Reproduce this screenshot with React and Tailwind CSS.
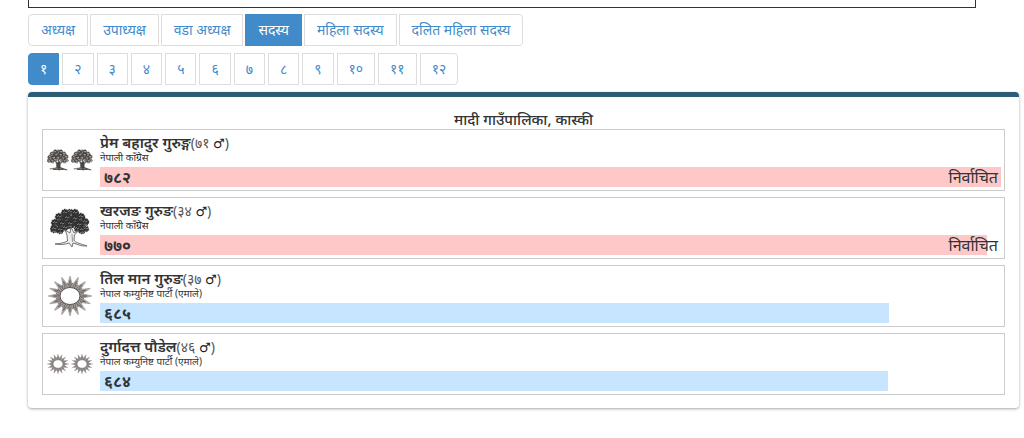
import { useState } from "react";

const posts = ["अध्यक्ष", "उपाध्यक्ष", "वडा अध्यक्ष", "सदस्य", "महिला सदस्य", "दलित महिला सदस्य"];
const wards = ["१", "२", "३", "४", "५", "६", "७", "८", "९", "१०", "११", "१२"];

const candidates = [
  { name: "प्रेम बहादुर गुरुङ्ग", age: "७१", party: "नेपाली काँग्रेस", votes: 782, label: "७८२", symbol: "tree", count: 2, elected: true },
  { name: "खरजङ गुरुङ", age: "३४", party: "नेपाली काँग्रेस", votes: 770, label: "७७०", symbol: "tree", count: 1, elected: true },
  { name: "तिल मान गुरुङ", age: "३७", party: "नेपाल कम्युनिष्ट पार्टी (एमाले)", votes: 685, label: "६८५", symbol: "sun", count: 1 },
  { name: "दुर्गादत्त पौडेल", age: "४६", party: "नेपाल कम्युनिष्ट पार्टी (एमाले)", votes: 684, label: "६८४", symbol: "sun", count: 2 },
];

const maxVotes = 782;

// [cx, cy, r] of the leaf clumps
const clumps = [
  [15, 5, 4], [20, 4, 3], [25, 5, 4], [9, 9, 4], [17, 10, 5], [25, 11, 5],
  [31, 9, 4], [35, 14, 4], [5, 15, 4], [12, 16, 5], [20, 16, 5], [29, 17, 5],
  [4, 21, 4], [10, 22, 4], [15, 20, 3], [27, 21, 3], [32, 22, 4], [36, 21, 3],
];

const Tree = ({ small, className }) => (
  <svg viewBox="0 0 40 40" className={className} aria-hidden="true">
    {clumps.map(([cx, cy, r]) => (
      <g key={`${cx}-${cy}`}>
        <circle
          cx={cx}
          cy={cy}
          r={r - 0.5}
          fill={small ? "#4d4845" : "#303030"}
          stroke="#3a3a3a"
          strokeWidth="1.4"
          strokeDasharray="1.5 1"
        />
        <path
          d={`M${cx - 2} ${cy}l1.5-1.5 1 1.5 2-1M${cx - 2} ${cy + 3}l2-1 2 .5`}
          fill="none"
          stroke={small ? "#d0cac6" : "#999"}
          strokeWidth={small ? "1.3" : ".7"}
        />
      </g>
    ))}
    <path
      d="M15 22 17 27 17.5 33 C14 35 10 35.5 5 36 C11 37 15 36.5 19 35 L22 39 23 35 C27 36 31 38.5 37 38 C31 35.5 25 35 24 32 L24.5 27 29 22 24 25 21 19 20 25Z"
      fill={small ? "#4a4542" : "#eee"}
      stroke="#555"
      strokeWidth=".8"
    />
    {small && <path d="M11 37H30" stroke="#444" strokeWidth="2" />}
    {!small && <path d="M22 26 22.5 34" stroke="#999" strokeWidth="1" />}
  </svg>
);

const Sun = ({ className }) => (
  <svg viewBox="-22 -20 44 40" className={className} aria-hidden="true">
    {Array.from({ length: 16 }, (_, i) => (
      <g key={i} transform={`scale(1 .92) rotate(${i * 22.5})`}>
        <path d="M-3.5-9-.5-22H.5L3.5-9Z" fill="#aaa4a3" />
        <path d="M-1.5-9 0-17 1.5-9M-3.5-9-3-14M3.5-9 3-14" fill="none" stroke="#6b6463" strokeWidth=".8" />
      </g>
    ))}
    <ellipse rx="10" ry="8.5" fill="#fff" stroke="#5b5453" strokeWidth="1" />
  </svg>
);

const symbols = { tree: Tree, sun: Sun };

const Pager = ({ items, active, onSelect, label, className, itemClassName }) => (
  <nav aria-label={label} className={`flex flex-wrap ${className}`}>
    {items.map((item, i) => (
      <button
        key={item}
        type="button"
        onClick={() => onSelect(i)}
        className={`border text-sm leading-5 first:rounded-l last:rounded-r ${itemClassName} ${
          i === active ? "border-[#428bca] bg-[#428bca] text-white" : "border-[#ddd] bg-white text-[#428bca]"
        }`}
      >
        {item}
      </button>
    ))}
  </nav>
);

const Candidate = ({ data }) => {
  const Symbol = symbols[data.symbol];
  const small = data.count > 1;
  const size = data.symbol === "tree" && !small ? "w-10" : small ? "w-[22px]" : "w-11";
  return (
    <li className="flex border border-[#ccc] pr-[3px]">
      <div className="mr-[3px] flex w-[54px] shrink-0 items-center justify-center gap-[2px]">
        {Array.from({ length: data.count }, (_, i) => (
          <Symbol key={i} small={small} className={size} />
        ))}
      </div>
      <div className="min-w-0 grow py-[3px]">
        <h3 className="flex h-[18px] items-baseline text-[15px] leading-[18px] text-[#333]">
          <span className="font-semibold">{data.name}</span>
          <span className="text-sm leading-[18px] text-[#555]">
            ({data.age} <b className="font-['DejaVu_Sans',sans-serif] text-[13px] text-[#222]">♂</b>)
          </span>
        </h3>
        <p className="text-[10px] leading-3 text-[#333]">{data.party}</p>
        <div className="relative mt-1 flex h-5 items-center justify-between pr-[3px] pl-1 text-base leading-5 text-[#333]">
          <div
            className={`absolute inset-y-0 left-0 ${data.elected ? "bg-[#ffc8c8]" : "bg-[#c8e5ff]"}`}
            style={{ width: `${(data.votes / maxVotes) * 100}%` }}
          />
          <b className="relative">{data.label}</b>
          {data.elected && <span className="relative">निर्वाचित</span>}
        </div>
      </div>
    </li>
  );
};

const App = () => {
  const [post, setPost] = useState(3);
  const [ward, setWard] = useState(0);
  return (
    <main className="bg-white pr-[5px] pb-7 pl-7 font-['Noto_Sans',sans-serif]">
      <div className="mr-[43px] h-2 border border-t-0 border-[#333]" />
      <Pager items={posts} active={post} onSelect={setPost} label="पद" className="mt-[6px] gap-[2px]" itemClassName="h-8 px-3" />
      <Pager items={wards} active={ward} onSelect={setWard} label="वडा" className="mt-[7px] gap-[3px]" itemClassName="h-8 px-[11px]" />
      <section className="mt-[7px] rounded-sm border-t-[5px] border-[#2b5d78] px-[14px] pt-3 pb-[13px] shadow-[0_1px_3px_rgba(0,0,0,0.35)]">
        <h2 className="text-center text-[15px] leading-5 font-medium text-[#333]">मादी गाउँपालिका, कास्की</h2>
        <ul className="flex flex-col gap-[6px]">
          {candidates.map((c) => (
            <Candidate key={c.name} data={c} />
          ))}
        </ul>
      </section>
    </main>
  );
};

export default App;
